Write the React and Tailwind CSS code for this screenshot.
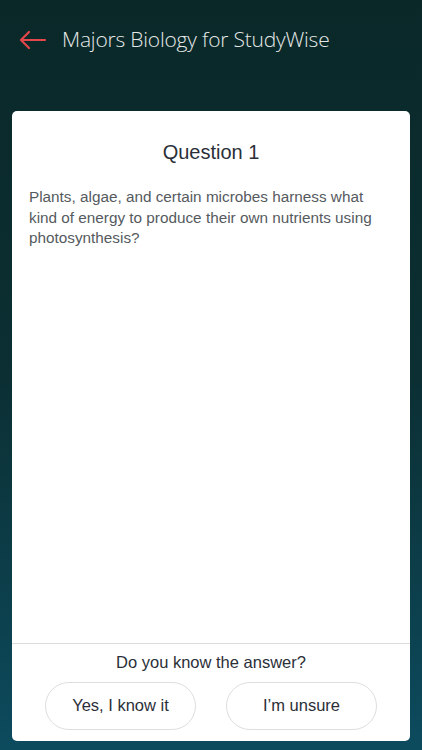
export default function App() {
  return (
    <div
      className="w-[422px] h-[750px] flex flex-col bg-gradient-to-b from-[#0a2828] via-[#0b2f33] to-[#0c4b5e]"
      style={{ fontFamily: '"Liberation Sans", Arial, sans-serif' }}
    >
      {/* Header */}
      <div className="h-[111px] flex items-start pt-[25px] pl-[19px]">
        <svg width="28" height="30" viewBox="0 0 28 30" fill="none" stroke="#e2474c" strokeWidth="2.2" strokeLinecap="round" strokeLinejoin="round">
          <path d="M2 15 H26 M10 7 L2 15 L10 23" />
        </svg>
        <span className="ml-[15px] text-[21px] text-[#e6e8e8] tracking-[-0.2px] leading-[28px]" style={{ fontFamily: '"Open Sans", sans-serif', fontWeight: 300 }}>
          Majors Biology for StudyWise
        </span>
      </div>

      {/* Card */}
      <div className="mx-[12px] h-[630px] bg-white rounded-[5px] flex flex-col">
        <div className="flex-1 px-[17px]">
          <h2 className="mt-[26px] text-center text-[20px] text-[#2b2f38]">Question 1</h2>
          <p className="mt-[20px] text-[15.3px] leading-[20.5px] text-[#555a5e]">
            Plants, algae, and certain microbes harness what kind of energy to produce their own nutrients using photosynthesis?
          </p>
        </div>
        <div className="h-[98px] border-t border-[#dcdcdc] flex flex-col items-center">
          <div className="mt-[6px] text-[16.5px] text-[#2b2f38]">Do you know the answer?</div>
          <div className="mt-[7px] flex gap-[30px]">
            <button className="w-[151px] h-[48px] rounded-full border border-[#dedede] text-[16.5px] text-[#2b2f38]">
              Yes, I know it
            </button>
            <button className="w-[151px] h-[48px] rounded-full border border-[#dedede] text-[16.5px] text-[#2b2f38]">
              I’m unsure
            </button>
          </div>
        </div>
      </div>
    </div>
  )
}
